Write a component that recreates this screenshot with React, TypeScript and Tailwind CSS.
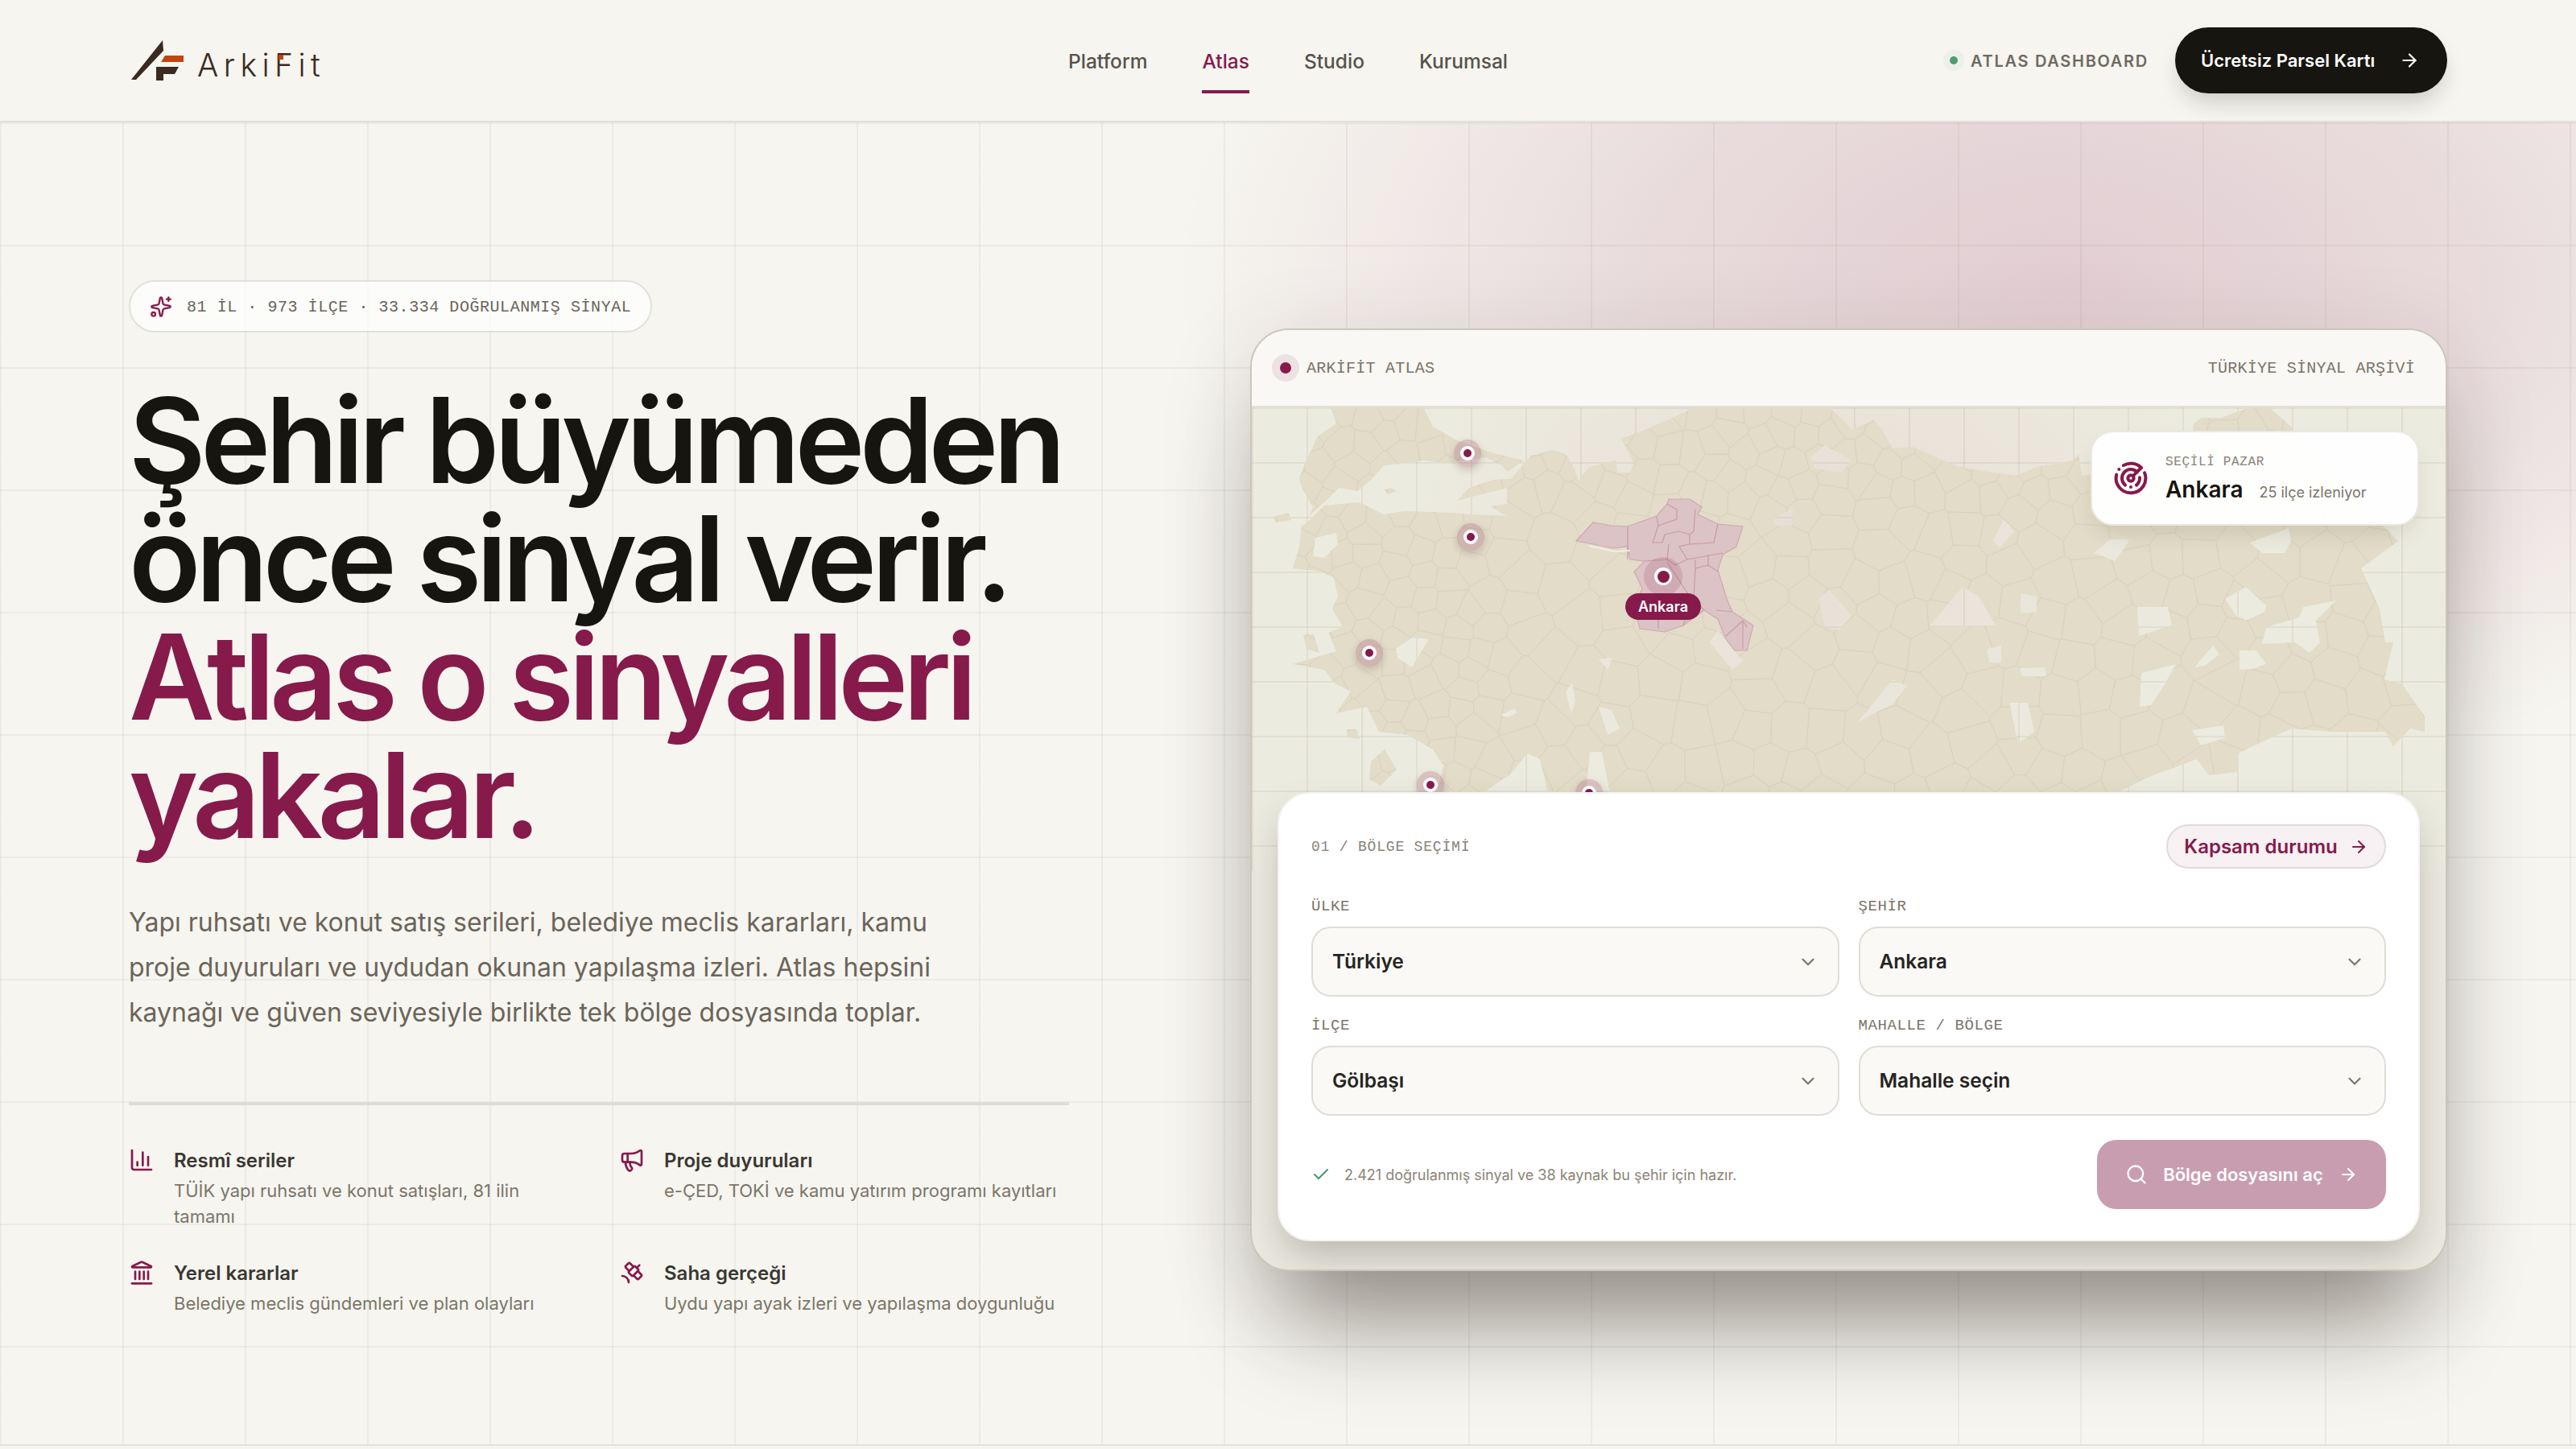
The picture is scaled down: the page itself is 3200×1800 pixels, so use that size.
import { ArrowRight, Check, ChevronDown, ChartColumn, Landmark, Megaphone, Radar, Satellite, Search, Sparkles } from "lucide-react";

const W = 1483;
const H = 576;

// Turkey outline in map coordinates, lakes and uncovered districts are holes
const land = [
  "97,-2 212,-2 225,24 255,41 280,50 301,57 337,66 318,80 310,72 290,62 262,66 240,70 215,66 185,70 164,72 150,88 132,104 108,100 92,116 72,134 66,146 76,124 62,100 59,88 66,70 82,36 105,20",
  "340,68 347,60 373,53 390,58 398,70 406,91 419,74 452,66 454,81 470,81 475,70 459,39 488,28 516,16 544,3 546,-2 715,-2 735,16 745,28 773,16 783,28 796,51 821,49 850,62 878,74 903,78 949,85 975,74 1020,66 1027,58 1031,85 1070,80 1110,72 1140,50 1168,45 1170,20 1180,13 1204,13 1245,-2 1262,-2 1291,24 1320,60 1370,120 1408,150 1424,166 1378,200 1401,250 1408,292 1418,292 1407,338 1429,344 1457,384 1457,403 1439,399 1418,421 1408,403 1342,403 1291,399 1265,411 1225,430 1225,453 1189,457 1174,437 1112,460 1072,480 445,480 435,428 420,428 415,480 368,480 358,437 342,430 322,455 286,480 230,478 238,445 225,425 194,407 158,403 143,372 105,380 123,353 102,342 90,326 51,319 105,303 95,280 113,273 100,250 107,235 102,212 87,204 51,200 59,173 62,148 69,143 90,122 133,118 164,133 189,129 250,131 271,133 317,135 296,123 317,120 317,100 286,108 255,116 270,100 300,90 322,89",
  "26,136 46,131 49,140 30,143",
  "164,103 172,100 180,104 170,108",
  "64,282 77,282 84,305 68,300",
  "118,400 130,400 134,412 120,410",
  "148,440 165,425 180,450 160,470 146,462",
];

const holes = [
  "694,62 712,47 745,66 732,81 699,76",
  "648,139 673,125 671,147 650,147",
  "704,238 717,227 745,258 730,277 712,273",
  "569,292 579,277 610,315 597,326",
  "179,300 199,286 220,288 199,323 181,311",
  "79,162 105,156 107,170 90,187 76,185",
  "431,372 447,376 457,399 442,407",
  "309,382 327,374 329,380 317,385",
  "390,353 398,342 402,365 397,380",
  "431,313 448,311 442,326",
  "921,166 934,139 947,154 929,175",
  "1046,181 1066,164 1092,164 1072,191",
  "842,271 883,223 903,235 924,271",
  "955,231 975,235 975,254 955,256",
  "1100,248 1138,248 1143,271 1102,284",
  "1209,238 1235,223 1260,246 1258,254 1235,265 1222,258",
  "1306,248 1347,240 1322,265 1327,292 1314,305 1296,292 1255,294 1260,273 1301,261",
  "1240,168 1288,150 1291,166 1283,181 1255,181",
  "1171,323 1194,296 1202,307 1184,321",
  "1227,302 1248,302 1260,319 1243,325 1227,326",
  "1105,330 1148,319 1133,346 1117,370 1103,372",
  "1168,401 1207,395 1209,411 1179,420",
  "941,367 964,367 972,403 952,418",
  "913,300 931,296 931,317 916,317",
  "753,391 796,338 814,346 796,369 773,380",
  "954,324 985,323 987,334 957,334",
];

const ankara =
  "403,166 424,143 447,147 467,148 503,135 516,120 518,114 544,114 559,124 554,133 579,145 610,148 602,173 585,183 579,202 590,238 597,254 623,271 615,302 600,302 589,288 579,263 562,252 536,271 513,279 482,275 475,246 485,225 475,204 488,191 470,189 467,173 449,175 419,169";

const ankaraLines = [
  "467,148 467,189",
  "503,135 505,147 498,168 510,168 513,158",
  "505,147 528,139 528,127 516,120",
  "551,127 549,154 544,158 544,170 574,168 579,145",
  "513,158 531,154 544,158",
  "518,170 516,189 526,196 541,189 531,173 544,170",
  "488,191 516,189",
  "541,189 585,181",
  "551,189 551,200 567,196 567,183",
  "516,192 546,238 536,271",
  "551,200 549,238 562,252",
  "567,196 579,204",
  "505,261 505,275",
  "577,252 597,254",
  "589,284 610,265 615,273",
  "610,265 610,300",
];

const toPath = (pts: string) => "M" + pts.trim().split(" ").join("L") + "Z";
const silhouette = [...land, ...holes].map(toPath).join("");

// district mesh: voronoi cells of seeded points, clipped to the outline
function buildMesh() {
  let s = 20347;
  const rand = () => {
    s = (s + 0x6d2b79f5) | 0;
    let t = Math.imul(s ^ (s >>> 15), 1 | s);
    t = (t + Math.imul(t ^ (t >>> 7), 61 | t)) ^ t;
    return ((t ^ (t >>> 14)) >>> 0) / 4294967296;
  };
  const sites: [number, number][] = [];
  for (let i = 0; i < 9000; i++) {
    const x = rand() * W;
    const y = rand() * 490;
    const r = y < 110 || x < 300 ? 24 : 36;
    if (sites.every(([a, b]) => (a - x) ** 2 + (b - y) ** 2 > r * r)) sites.push([x, y]);
  }
  let d = "";
  for (const [x, y] of sites) {
    let poly: [number, number][] = [[x - 140, y - 140], [x + 140, y - 140], [x + 140, y + 140], [x - 140, y + 140]];
    for (const [a, b] of sites) {
      if (a === x && b === y) continue;
      if (Math.abs(a - x) > 150 || Math.abs(b - y) > 150) continue;
      const nx = a - x;
      const ny = b - y;
      const c = (nx * (a + x)) / 2 + (ny * (b + y)) / 2;
      const next: [number, number][] = [];
      poly.forEach((p, i) => {
        const q = poly[(i + 1) % poly.length];
        const dp = nx * p[0] + ny * p[1] - c;
        const dq = nx * q[0] + ny * q[1] - c;
        if (dp <= 0) next.push(p);
        if (dp < 0 !== dq < 0) {
          const t = dp / (dp - dq);
          next.push([p[0] + (q[0] - p[0]) * t, p[1] + (q[1] - p[1]) * t]);
        }
      });
      poly = next;
    }
    if (poly.length) d += "M" + poly.map((p) => p[0].toFixed(1) + "," + p[1].toFixed(1)).join("L") + "Z";
  }
  return d;
}

const mesh = buildMesh();

const pins = [
  { x: 268, y: 57 },
  { x: 272, y: 161 },
  { x: 146, y: 305 },
  { x: 222, y: 469 },
  { x: 419, y: 479 },
];

const features = [
  { icon: ChartColumn, title: "Resmî seriler", text: "TÜİK yapı ruhsatı ve konut satışları, 81 ilin tamamı" },
  { icon: Megaphone, title: "Proje duyuruları", text: "e-ÇED, TOKİ ve kamu yatırım programı kayıtları" },
  { icon: Landmark, title: "Yerel kararlar", text: "Belediye meclis gündemleri ve plan olayları" },
  { icon: Satellite, title: "Saha gerçeği", text: "Uydu yapı ayak izleri ve yapılaşma doygunluğu" },
];

const fields = [
  { label: "ÜLKE", value: "Türkiye" },
  { label: "ŞEHİR", value: "Ankara" },
  { label: "İLÇE", value: "Gölbaşı" },
  { label: "MAHALLE / BÖLGE", value: "Mahalle seçin" },
];

const Logo = () => (
  <div className="relative flex items-center gap-[15px]">
    <svg width="70" height="52" viewBox="160 49 70 52">
      <polygon points="202,50 203,63 169,99 163,99" fill="#3b2a20" />
      <polygon points="205,69 228,69 228,77 200,77" fill="#c0450f" />
      <polygon points="194,83 222,83 217,92 203,92 203,100 194,100" fill="#3b2a20" />
    </svg>
    <span className="mt-[10px] font-['Inter',sans-serif] text-[39px] font-light leading-none tracking-[0.165em] text-[#3b2a20]">ArkiFit</span>
    <span className="absolute left-[186px] top-[19px] h-[6px] w-[6px] bg-[#c0450f]" />
  </div>
);

const Pin = ({ x, y }: { x: number; y: number }) => (
  <div
    className="absolute flex h-[34px] w-[34px] -translate-x-1/2 -translate-y-1/2 items-center justify-center rounded-full bg-[#861a4b]/20 shadow-[0_4px_10px_rgba(60,30,40,0.18)]"
    style={{ left: x, top: y }}
  >
    <div className="flex h-[18px] w-[18px] items-center justify-center rounded-full bg-white">
      <div className="h-[10px] w-[10px] rounded-full bg-[#861a4b]" />
    </div>
  </div>
);

const TurkeyMap = () => (
  <svg width={W} height={H} viewBox={`0 0 ${W} ${H}`} className="absolute left-0 top-0">
    <defs>
      <clipPath id="land">
        <path d={silhouette} clipRule="evenodd" />
      </clipPath>
    </defs>
    <path d={silhouette} fillRule="evenodd" fill="#e2dcc8" />
    <path d={mesh} fill="none" stroke="#dad3bf" strokeWidth="1" clipPath="url(#land)" />
    <path d={toPath(ankara)} fill="#dcc3c5" stroke="#cfa9b1" strokeWidth="1.2" />
    {ankaraLines.map((l) => (
      <polyline key={l} points={l} fill="none" stroke="#c79ba7" strokeWidth="1.2" />
    ))}
    <polyline points="419,172 450,179 470,178" fill="none" stroke="#f6f3ea" strokeWidth="1.5" />
  </svg>
);

export default function App() {
  return (
    <div className="relative h-[1800px] overflow-hidden bg-[#f6f5f0] font-['Inter',sans-serif] text-[#16150f]">
      <header className="relative z-10 grid h-[152px] grid-cols-[1fr_auto_1fr] items-center border-b-2 border-[#e2e0da] bg-[#f6f5f0] px-[160px]">
        <Logo />
        <nav className="mt-[3px] flex gap-[68px] text-[24.5px] font-medium text-[#57524a]">
          <a>Platform</a>
          <a className="relative text-[#861a4b]">
            Atlas
            <span className="absolute inset-x-0 top-[54px] h-[4px] bg-[#861a4b]" />
          </a>
          <a>Studio</a>
          <a>Kurumsal</a>
        </nav>
        <div className="flex items-center justify-end">
          <span className="h-[10px] w-[10px] rounded-full bg-[#4a9d6f] shadow-[0_0_0_8px_rgba(74,157,111,0.05)]" />
          <span className="ml-[16px] mt-[1px] text-[20px] font-semibold tracking-[0.085em] text-[#6f695e]">ATLAS DASHBOARD</span>
          <a className="ml-[33px] flex h-[82px] w-[338px] items-center justify-between rounded-full bg-[#16150f] pl-[32px] pr-[34px] text-[22px] font-semibold text-white shadow-[0_16px_30px_-8px_rgba(22,21,15,0.22)]">
            Ücretsiz Parsel Kartı
            <ArrowRight size={26} strokeWidth={2} />
          </a>
        </div>
      </header>

      <main className="relative h-[1644px] border-b-2 border-[#e2e0da] bg-[radial-gradient(ellipse_1100px_640px_at_2560px_200px,rgba(134,26,75,0.18),rgba(134,26,75,0.12)_45%,transparent_100%)]">
        <div className="absolute inset-0 bg-[linear-gradient(to_right,rgba(100,90,70,0.07)_2px,transparent_2px),linear-gradient(to_bottom,rgba(100,90,70,0.07)_2px,transparent_2px)] bg-[size:152px_152px]" />
        <div className="relative flex items-start justify-between px-[160px] pt-[196px]">
          <section className="w-[1168px]">
            <div className="flex h-[65px] w-[650px] items-center gap-[18px] rounded-full border-2 border-[#e2e0da] bg-white/70 pl-[24px] font-['Liberation_Mono',monospace] text-[20px] tracking-[0.55px] text-[#6b6459]">
              <Sparkles size={28} strokeWidth={2} className="text-[#861a4b]" />
              <span className="pt-[2px]">81 İL · 973 İLÇE · 33.334 DOĞRULANMIŞ SİNYAL</span>
            </div>
            <h1 className="mt-[60px] text-[147px] font-semibold leading-[147px] tracking-[-0.043em]">
              Şehir büyümeden
              <br />
              önce sinyal verir.
              <br />
              <span className="text-[#861a4b]">
                Atlas o sinyalleri
                <br />
                yakalar.
              </span>
            </h1>
            <p className="mt-[57px] w-[1010px] text-[32px] leading-[56px] text-[#6b6459]">
              Yapı ruhsatı ve konut satış serileri, belediye meclis kararları, kamu proje duyuruları ve uydudan okunan yapılaşma izleri. Atlas hepsini kaynağı ve güven seviyesiyle birlikte tek bölge dosyasında toplar.
            </p>
            <div className="mt-[83px] h-[4px] bg-[#dedcd5]" />
            <div className="mt-[52px] grid grid-cols-[559px_559px] gap-x-[50px] gap-y-[38px]">
              {features.map((f) => (
                <div key={f.title} className="flex gap-[24px]">
                  <f.icon size={32} strokeWidth={2} className="shrink-0 text-[#861a4b]" />
                  <div>
                    <h3 className="text-[24px] font-semibold leading-[34px] text-[#3a3731]">{f.title}</h3>
                    <p className="mt-[4px] text-[22px] leading-[32px] text-[#7b7569]">{f.text}</p>
                  </div>
                </div>
              ))}
            </div>
          </section>

          <section className="mt-[60px] w-[1487px] overflow-hidden rounded-[48px] border-2 border-[#cbc6ba] bg-[#ebe9e0] pb-[35px] shadow-[0_100px_120px_-40px_rgba(40,30,20,0.42),0_30px_120px_rgba(40,30,20,0.14)]">
            <div className="flex h-[96px] items-center justify-between border-b-2 border-[#e3e0d9] bg-[#f9f8f4] pl-[25px] pr-[38px] font-['Liberation_Mono',monospace] text-[20px] tracking-[0.25px] text-[#7b7468]">
              <div className="flex items-center gap-[9px]">
                <span className="flex h-[34px] w-[34px] items-center justify-center rounded-full bg-[#861a4b]/10">
                  <span className="h-[14px] w-[14px] rounded-full bg-[#861a4b]" />
                </span>
                <span className="pt-[2px]">ARKİFİT ATLAS</span>
              </div>
              <span className="pt-[2px]">TÜRKİYE SİNYAL ARŞİVİ</span>
            </div>

            <div className="relative h-[576px] bg-[#ecebdf] bg-[linear-gradient(to_right,rgba(120,100,70,0.09)_2px,transparent_2px),linear-gradient(to_bottom,rgba(120,100,70,0.09)_2px,transparent_2px),radial-gradient(ellipse_500px_340px_at_700px_160px,rgba(200,120,140,0.12),transparent_100%)] bg-[size:68px_68px,68px_68px,100%_100%]">
              <TurkeyMap />
              {pins.map((p) => (
                <Pin key={p.x} x={p.x} y={p.y} />
              ))}
              <div className="absolute left-[511px] top-[210px] flex h-[48px] w-[48px] -translate-x-1/2 -translate-y-1/2 items-center justify-center rounded-full bg-[#861a4b]/15">
                <div className="flex h-[22px] w-[22px] items-center justify-center rounded-full bg-white">
                  <div className="h-[15px] w-[15px] rounded-full bg-[#861a4b]" />
                </div>
              </div>
              <div className="absolute left-[511px] top-[231px] flex h-[33px] w-[94px] -translate-x-1/2 items-center justify-center rounded-full bg-[#861a4b] text-[18px] font-semibold text-white">
                Ankara
              </div>
              <div className="absolute right-[33px] top-[29px] flex h-[118px] w-[408px] items-center gap-[21px] rounded-[28px] border-2 border-[#ebe8e1] bg-white/95 pl-[26px] shadow-[0_14px_30px_-10px_rgba(60,50,30,0.18)]">
                <Radar size={44} strokeWidth={2.2} className="shrink-0 text-[#861a4b]" />
                <div>
                  <div className="font-['Liberation_Mono',monospace] text-[16px] tracking-[0.65px] text-[#8a8377]">SEÇİLİ PAZAR</div>
                  <div className="mt-[4px] flex items-baseline gap-[20px]">
                    <span className="text-[28px] font-semibold leading-[36px]">Ankara</span>
                    <span className="text-[18px] text-[#7b7569]">25 ilçe izleniyor</span>
                  </div>
                </div>
              </div>
            </div>

            <div className="relative mx-[32px] -mt-[98px] rounded-[40px] border-2 border-[#f4f3ef] bg-white px-[40px] pb-[38px] pt-[38px] shadow-[0_24px_50px_-8px_rgba(40,30,20,0.26)]">
              <div className="flex items-center justify-between">
                <span className="pt-[2px] font-['Liberation_Mono',monospace] text-[18px] tracking-[0.8px] text-[#8a8377]">01 / BÖLGE SEÇİMİ</span>
                <a className="flex h-[55px] w-[273px] items-center justify-center gap-[14px] rounded-full border-2 border-[#e3d9dc] bg-[#f7f1f4] text-[24px] font-semibold text-[#861a4b]">
                  Kapsam durumu
                  <ArrowRight size={24} strokeWidth={2} />
                </a>
              </div>
              <div className="mt-[35px] grid grid-cols-2 gap-x-[24px] gap-y-[24px]">
                {fields.map((f) => (
                  <div key={f.label}>
                    <div className="font-['Liberation_Mono',monospace] text-[19px] leading-[24px] tracking-[0.6px] text-[#7b7468]">{f.label}</div>
                    <div className="mt-[13px] flex h-[87px] items-center justify-between rounded-[24px] border-2 border-[#e0ddd6] bg-[#faf9f6] pl-[24px] pr-[24px] text-[24.5px] font-semibold text-[#26241f]">
                      {f.value}
                      <ChevronDown size={26} strokeWidth={2} className="text-[#7b7468]" />
                    </div>
                  </div>
                ))}
              </div>
              <div className="mt-[30px] flex items-center justify-between">
                <div className="flex items-center gap-[17px] text-[18px] text-[#8a8377]">
                  <Check size={24} strokeWidth={2} className="text-[#3f9a6c]" />
                  2.421 doğrulanmış sinyal ve 38 kaynak bu şehir için hazır.
                </div>
                <a className="flex h-[86px] w-[359px] items-center justify-center gap-[19px] rounded-[24px] bg-[#c99db0] text-[22px] font-semibold text-white">
                  <Search size={28} strokeWidth={2} />
                  Bölge dosyasını aç
                  <ArrowRight size={24} strokeWidth={2} />
                </a>
              </div>
            </div>
          </section>
        </div>
      </main>
    </div>
  );
}
